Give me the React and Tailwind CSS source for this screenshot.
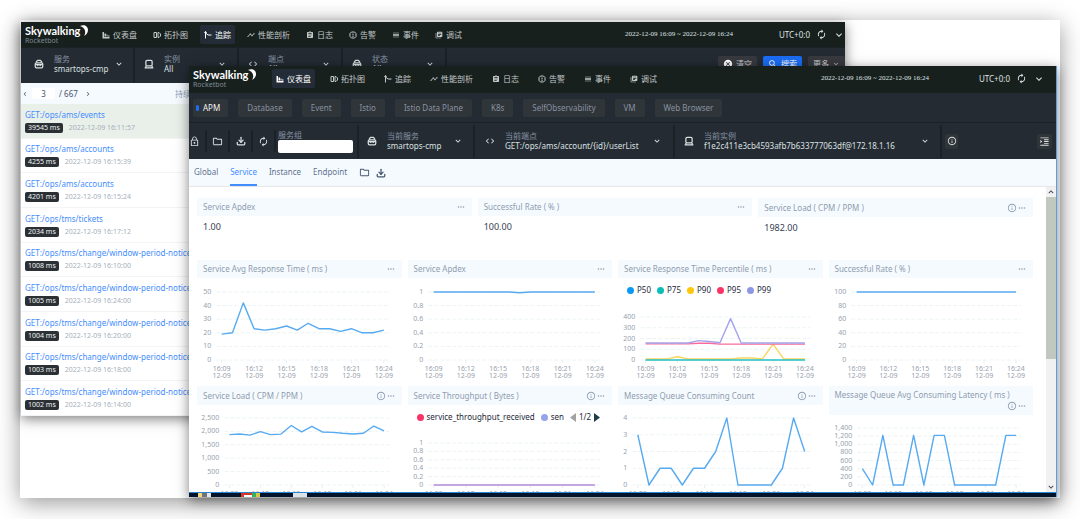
import clsx from "clsx";
import {
  MdAssignment,
  MdAutorenew,
  MdCancel,
  MdChevronLeft,
  MdChevronRight,
  MdCode,
  MdExpandMore,
  MdFormatIndentIncrease,
  MdInfoOutline,
  MdKeyboardArrowDown,
  MdKeyboardArrowUp,
  MdLibraryBooks,
  MdLockOutline,
  MdMoreHoriz,
  MdOutlineFolder,
  MdReorder,
  MdSearch,
  MdTimeline,
} from "react-icons/md";
import { Download } from "lucide-react";

const BLUE = "#57aaf0";

const TRACES = [
  { path: "GET:/ops/ams/events", ms: 39545, time: "2022-12-09 16:11:57" },
  { path: "GET:/ops/ams/accounts", ms: 4255, time: "2022-12-09 16:15:39" },
  { path: "GET:/ops/ams/accounts", ms: 4201, time: "2022-12-09 16:15:24" },
  { path: "GET:/ops/tms/tickets", ms: 2034, time: "2022-12-09 16:17:12" },
  { path: "GET:/ops/tms/change/window-period-notice", ms: 1008, time: "2022-12-09 16:10:00" },
  { path: "GET:/ops/tms/change/window-period-notice", ms: 1005, time: "2022-12-09 16:24:00" },
  { path: "GET:/ops/tms/change/window-period-notice", ms: 1004, time: "2022-12-09 16:20:00" },
  { path: "GET:/ops/tms/change/window-period-notice", ms: 1003, time: "2022-12-09 16:18:00" },
  { path: "GET:/ops/tms/change/window-period-notice", ms: 1002, time: "2022-12-09 16:14:00" },
];

const LAYERS = ["APM", "Database", "Event", "Istio", "Istio Data Plane", "K8s", "SelfObservability", "VM", "Web Browser"];

const TIMES = ["16:09", "16:12", "16:15", "16:18", "16:21", "16:24"];

function ChartIcon(props) {
  return (
    <svg viewBox="0 0 16 16" fill="currentColor" {...props}>
      <path d="M1 2h3v10h11v3H1zM5 5h3v6H5zM9 7h2v4H9zM12 9h3v2h-3z" />
    </svg>
  );
}

function TopologyIcon(props) {
  return (
    <svg viewBox="0 0 16 16" fill="none" stroke="currentColor" strokeWidth="2" {...props}>
      <path d="M2 3h5v10H2zM10 3h2l3 3v4l-3 3h-2z" />
    </svg>
  );
}

function TraceIcon(props) {
  return (
    <svg viewBox="0 0 16 16" fill="none" stroke="currentColor" strokeWidth="2" {...props}>
      <path d="M3 1v14M3 4l5 4h7" />
      <circle cx="3" cy="3" r="1.5" fill="currentColor" />
    </svg>
  );
}

function AlarmIcon(props) {
  return (
    <svg viewBox="0 0 16 16" fill="none" stroke="currentColor" strokeWidth="2" {...props}>
      <path d="M5 2h6l3 3v6l-3 3H5l-3-3V5zM8 5v4M8 10v2" />
    </svg>
  );
}

function ServiceIcon(props) {
  return (
    <svg viewBox="0 0 16 16" fill="none" stroke="currentColor" strokeWidth="2" {...props}>
      <path d="M4 6V4l2-2h4l2 2v2" />
      <rect x="2" y="6" width="12" height="8" rx="2" />
      <path d="M2 9h12M6 9v2M10 9v2" />
    </svg>
  );
}

function InstanceIcon(props) {
  return (
    <svg viewBox="0 0 16 16" fill="none" stroke="currentColor" strokeWidth="2" {...props}>
      <rect x="3" y="2" width="10" height="9" rx="2" />
      <path d="M1 14h14M3 11v3M13 11v3" />
    </svg>
  );
}

const MENU = [
  { name: "仪表盘", icon: ChartIcon },
  { name: "拓扑图", icon: TopologyIcon },
  { name: "追踪", icon: TraceIcon },
  { name: "性能剖析", icon: MdTimeline },
  { name: "日志", icon: MdAssignment },
  { name: "告警", icon: AlarmIcon },
  { name: "事件", icon: MdReorder },
  { name: "调试", icon: MdLibraryBooks },
];

function Logo() {
  return (
    <div className="w-[58px] shrink-0">
      <div className="flex items-start">
        <span className="font-[Lato] text-[11px] leading-[12px] font-bold text-white">Skywalking</span>
        <svg viewBox="0 0 8 11" className="h-[11px] w-2 shrink-0">
          <path d="M0 1C4-1 8 1 8 5c0 3-2 5-4 6 2-3 2-8-4-10z" fill="#fff" />
        </svg>
      </div>
      <div className="text-[7px] leading-[8px] text-[#7d8a94]">Rocketbot</div>
    </div>
  );
}

function TopNav({ active, className, menuClass, rightClass }) {
  return (
    <header className={clsx("flex items-center bg-[#18201e] text-[#c3c9c9]", className)}>
      <Logo />
      <nav className={clsx("flex items-center", menuClass)}>
        {MENU.map(({ name, icon: Icon }) => (
          <a
            key={name}
            href="#"
            className={clsx(
              "flex h-[19px] items-center gap-[3px] rounded-xs px-1 text-[8px] whitespace-nowrap",
              name === active && "bg-[#242c37] text-white"
            )}
          >
            <Icon className="h-2 w-2" />
            {name}
          </a>
        ))}
      </nav>
      <div className={clsx("ml-auto flex items-center text-[#dfe3e3]", rightClass)}>
        <span className="font-['Liberation_Serif'] text-[7px] whitespace-nowrap">
          2022-12-09 16:09 ~ 2022-12-09 16:24
        </span>
        <div className="flex items-center gap-1.5">
          <span className="text-[8px]">UTC+0:0</span>
          <button aria-label="刷新">
            <MdAutorenew className="h-[11px] w-[11px]" />
          </button>
          <button aria-label="展开">
            <MdExpandMore className="h-3 w-3" />
          </button>
        </div>
      </div>
    </header>
  );
}

function Selector({ icon: Icon, label, value, className }) {
  return (
    <label className={clsx("flex shrink-0 items-center border-r-2 border-[#1b2226] text-[#dbe0e0]", className)}>
      <Icon className="mr-[10px] h-[10px] w-[10px] shrink-0" />
      <span className="flex min-w-0 flex-1 flex-col">
        <span className="text-[8px] leading-[10px] text-[#8793a3]">{label}</span>
        <select className="w-full appearance-none bg-transparent text-[8px] leading-[10px]">
          <option>{value}</option>
        </select>
      </span>
      <MdExpandMore className="h-[10px] w-[10px] shrink-0" />
    </label>
  );
}

function TraceWindow() {
  return (
    <section className="absolute top-0.5 right-[215px] bottom-[82px] left-px flex flex-col overflow-hidden bg-white shadow-[0_3px_12px_rgba(0,0,0,0.5)]">
      <TopNav active="追踪" className="h-[25px] shrink-0 pl-1" menuClass="ml-[15px] gap-2" rightClass="gap-[46px]" />
      <div className="flex h-9 shrink-0 border-t border-[#1b2226] bg-[#242b33]">
        <Selector icon={ServiceIcon} label="服务" value="smartops-cmp" className="w-[114px] pr-[9px] pb-1 pl-[13px]" />
        <Selector icon={InstanceIcon} label="实例" value="All" className="w-[104px] pr-[10px] pb-1 pl-[9px]" />
        <Selector icon={MdCode} label="端点" value="All" className="w-[104px] pr-[10px] pb-1 pl-[9px]" />
        <Selector icon={ServiceIcon} label="状态" value="All" className="w-[104px] pr-[10px] pb-1 pl-[9px]" />
        <div className="ml-auto flex items-start gap-1.5 pt-2 text-[8px] text-[#c8cccc]">
          <button className="flex h-4 items-center gap-[3px] rounded-xs bg-[#37393f] px-[5px]">
            <MdCancel className="h-[10px] w-[10px] text-white" />
            清空
          </button>
          <button className="flex h-4 items-center gap-[3px] rounded-xs bg-[#1b6df5] px-[5px] text-white">
            <MdSearch className="h-[10px] w-[10px]" />
            搜索
          </button>
          <button className="flex h-4 items-center gap-[3px] rounded-xs bg-[#37393f] px-[5px]">
            更多
            <MdExpandMore className="h-2 w-2" />
          </button>
        </div>
      </div>
      <div className="flex min-h-0 w-48 flex-1 flex-col">
        <div className="flex h-[21px] shrink-0 items-center bg-[#f5faff] pr-1.5 text-[8px] text-slate-600">
          <button className="w-[11px] text-slate-600" aria-label="上一页">
            <MdChevronLeft className="h-2 w-2" />
          </button>
          <input className="h-[11px] w-[23px] rounded-xs bg-white text-center" defaultValue="3" aria-label="页码" />
          <span className="ml-1">/ 667</span>
          <button className="ml-1.5 text-slate-600" aria-label="下一页">
            <MdChevronRight className="h-2 w-2" />
          </button>
          <span className="ml-auto text-slate-400">持续时间</span>
        </div>
        <ul className="grid flex-1 auto-rows-fr">
          {TRACES.map((trace, i) => (
            <li
              key={i}
              className={clsx(
                "flex flex-col justify-center gap-[3px] border-b border-gray-100 pl-1",
                i === 0 && "bg-[#e9f0ea]"
              )}
            >
              <a href="#" className="text-[8px] leading-[11px] whitespace-nowrap text-[#448dfe]">
                {trace.path}
              </a>
              <div className="flex items-center gap-1.5 text-[7px] leading-[10px]">
                <span className="rounded-xs bg-[#2b3034] px-[3px] text-gray-100">{trace.ms} ms</span>
                <span className="text-[#a5afba]">{trace.time}</span>
              </div>
            </li>
          ))}
        </ul>
      </div>
    </section>
  );
}

function Chart({ left, top, bottom, height, ticks, max, series }) {
  const right = 192;
  const step = (right - left) / 16;
  const x = (i) => left + step * (i + 0.5);
  const y = (v) => bottom - (v / max) * (bottom - top);
  return (
    <svg viewBox={`0 0 204 ${height}`} height={height} className="block w-full">
      {ticks.map((tick, i) => {
        const ty = top + ((bottom - top) * i) / (ticks.length - 1);
        return (
          <g key={tick}>
            <line x1={left} x2={right} y1={ty} y2={ty} stroke="#edf3f4" strokeWidth="1" strokeDasharray="4 2" />
            <text x={left - 5} y={ty + 2} textAnchor="end" fontSize="7" fill="#98a2ae">
              {tick}
            </text>
          </g>
        );
      })}
      {TIMES.map((time, i) => (
        <g key={time} fontSize="7" fill="#98a2ae" textAnchor="middle">
          <line x1={x(i * 3)} x2={x(i * 3)} y1={bottom} y2={bottom + 3} stroke="#e8eef0" />
          <text x={x(i * 3)} y={bottom + 11}>{time}</text>
          <text x={x(i * 3)} y={bottom + 18}>12-09</text>
        </g>
      ))}
      {series.map(({ color, data }) => (
        <polyline
          key={color}
          points={data.map((v, i) => `${x(i)},${y(v)}`).join(" ")}
          fill="none"
          stroke={color}
          strokeWidth="1.4"
          strokeLinejoin="round"
        />
      ))}
    </svg>
  );
}

function Widget({ title, info, children }) {
  return (
    <article className="min-w-0">
      <div className="flex flex-wrap items-center gap-x-2 bg-[#f5faff] px-1.5 py-1 text-[#8f9dae]">
        <h2 className="text-[8px] leading-[10px] whitespace-nowrap">{title}</h2>
        <span className={clsx("ml-auto flex items-center", info && "h-[11px]")}>
          {info && <MdInfoOutline className="h-[10px] w-[10px]" />}
          <button aria-label="更多" className="flex">
            <MdMoreHoriz className="h-[10px] w-[10px]" />
          </button>
        </span>
      </div>
      {children}
    </article>
  );
}

function Dot({ color }) {
  return <span className={clsx("h-[7px] w-[7px] shrink-0 rounded-full", color)} />;
}

const PERCENTILES = [
  { name: "P50", color: "bg-[#0b98f5]" },
  { name: "P75", color: "bg-[#0abdb8]" },
  { name: "P90", color: "bg-[#fec70b]" },
  { name: "P95", color: "bg-[#fb3468]" },
  { name: "P99", color: "bg-[#8f96e6]" },
];

const flat = (v) => Array(16).fill(v);

function Dashboard() {
  return (
    <div className="min-w-0 flex-1 space-y-1.5 pt-[11px] pr-[13px] pl-2">
      <div className="grid h-14 grid-cols-3 gap-1.5">
        <Widget title="Service Apdex">
          <p className="px-1.5 pt-1 text-[9px] leading-[14px] text-gray-700">1.00</p>
        </Widget>
        <Widget title="Successful Rate ( % )">
          <p className="px-1.5 pt-1 text-[9px] leading-[14px] text-gray-700">100.00</p>
        </Widget>
        <Widget title="Service Load ( CPM / PPM )" info>
          <p className="px-1.5 pt-1 text-[9px] leading-[14px] text-gray-700">1982.00</p>
        </Widget>
      </div>
      <div className="grid grid-cols-4 gap-1.5">
        <Widget title="Service Avg Response Time ( ms )">
          <Chart
            left={19} top={14} bottom={82} height={102} max={50}
            ticks={["50", "40", "30", "20", "10", "0"]}
            series={[{ color: BLUE, data: [19, 20, 42, 23, 22, 23, 25, 22, 27, 23, 23, 21, 23, 20, 20, 22] }]}
          />
        </Widget>
        <Widget title="Service Apdex">
          <Chart
            left={20} top={14} bottom={82} height={102} max={1}
            ticks={["1", "0.8", "0.6", "0.4", "0.2", "0"]}
            series={[{ color: BLUE, data: [1, 1, 1, 1, 1, 1, 1, 1, 0.99, 1, 1, 1, 1, 1, 1, 1] }]}
          />
        </Widget>
        <Widget title="Service Response Time Percentile ( ms )">
          <div className="flex h-6 items-center gap-1.5 pl-[9px] text-[8px] text-gray-800">
            {PERCENTILES.map((p) => (
              <span key={p.name} className="flex items-center gap-[3px]">
                <Dot color={p.color} />
                {p.name}
              </span>
            ))}
          </div>
          <Chart
            left={22} top={15} bottom={58} height={78} max={400}
            ticks={["400", "300", "200", "100", "0"]}
            series={[
              { color: "#fbd45c", data: [10, 10, 10, 30, 10, 10, 10, 10, 10, 18, 18, 10, 147, 10, 10, 10] },
              { color: "#22bfc4", data: flat(0) },
              { color: "#fb6a9a", data: [150, 150, 150, 150, 150, 156, 156, 148, 148, 148, 148, 148, 148, 148, 148, 148] },
              { color: "#a3a4ec", data: [158, 158, 158, 158, 158, 180, 172, 160, 385, 158, 158, 158, 158, 158, 158, 158] },
            ]}
          />
        </Widget>
        <Widget title="Successful Rate ( % )">
          <Chart
            left={22} top={14} bottom={82} height={102} max={100}
            ticks={["100", "80", "60", "40", "20", "0"]}
            series={[{ color: BLUE, data: flat(100) }]}
          />
        </Widget>
      </div>
      <div className="grid grid-cols-4 gap-1.5">
        <Widget title="Service Load ( CPM / PPM )" info>
          <Chart
            left={27} top={13} bottom={80} height={102} max={2500}
            ticks={["2,500", "2,000", "1,500", "1,000", "500", "0"]}
            series={[
              {
                color: BLUE,
                data: [1880, 1905, 1860, 1990, 1880, 1900, 2220, 1980, 2190, 1980, 1965, 1930, 1905, 1930, 2200, 2020],
              },
            ]}
          />
        </Widget>
        <Widget title="Service Throughput ( Bytes )" info>
          <div className="flex h-6 items-center gap-[3px] pl-[9px] text-[8px] whitespace-nowrap text-gray-800">
            <Dot color="bg-[#fb3468]" />
            <span className="mr-[3px]">service_throughput_received</span>
            <Dot color="bg-[#95a4ea]" />
            <span className="mr-[3px]">sen</span>
            <button aria-label="上一页">
              <svg viewBox="0 0 6 9" className="h-[9px] w-1.5"><path d="M6 0v9L0 4.5z" fill="#a3a3a3" /></svg>
            </button>
            <span>1/2</span>
            <button aria-label="下一页">
              <svg viewBox="0 0 6 9" className="h-[9px] w-1.5"><path d="M0 0v9l6-4.5z" fill="#223b4a" /></svg>
            </button>
          </div>
          <Chart
            left={20} top={14} bottom={56} height={78} max={1}
            ticks={["1", "0.8", "0.6", "0.4", "0.2", "0"]}
            series={[{ color: "#b58ad8", data: flat(0) }]}
          />
        </Widget>
        <Widget title="Message Queue Consuming Count" info>
          <Chart
            left={14} top={13} bottom={80} height={102} max={4}
            ticks={["4", "3", "2", "1", "0"]}
            series={[{ color: BLUE, data: [3, 0, 1, 1, 0, 1, 1, 2, 4, 0, 0, 0, 0, 1, 4, 2] }]}
          />
        </Widget>
        <Widget title="Message Queue Avg Consuming Latency ( ms )" info>
          <Chart
            left={28} top={13} bottom={70} height={92} max={1400}
            ticks={["1,400", "1,200", "1,000", "800", "600", "400", "200", "0"]}
            series={[
              { color: BLUE, data: [400, 0, 1220, 0, 0, 1220, 0, 1220, 1220, 0, 0, 0, 0, 0, 1220, 1220] },
            ]}
          />
        </Widget>
      </div>
    </div>
  );
}

function ToolButton({ label, children }) {
  return (
    <button aria-label={label} className="flex h-[22px] w-[23px] shrink-0 items-center justify-center border-r-2 border-[#1b2226]">
      {children}
    </button>
  );
}

function DashboardWindow() {
  return (
    <section className="absolute top-[46px] right-[3px] bottom-px left-[169px] flex flex-col overflow-hidden border-r border-[#5b9fe0] bg-white shadow-[0_3px_12px_rgba(0,0,0,0.5)]">
      <TopNav active="仪表盘" className="h-[27px] shrink-0 pr-[11px] pb-0.5 pl-1" menuClass="ml-[21px] gap-[11px]" rightClass="gap-[50px]" />
      <div className="flex h-[30px] shrink-0 items-center gap-[10px] border-b border-[#1b2226] bg-[#242b33] pl-1 text-[8px]">
        {LAYERS.map((layer, i) => (
          <button
            key={layer}
            className={clsx(
              "flex h-[18px] items-center rounded-xs bg-[#30353a] whitespace-nowrap",
              i === 0 ? "gap-1 pr-2 pl-[3px] text-gray-100" : "px-[9px] text-[#8791a0]"
            )}
          >
            {i === 0 && <span className="h-1.5 w-[3px] rounded-full bg-[#1b6df5]" />}
            {layer}
          </button>
        ))}
      </div>
      <div className="flex h-9 shrink-0 items-center bg-[#242b33] text-[#dbe0e0]">
        <button aria-label="锁定" className="flex h-[22px] w-[18px] shrink-0 items-center border-r-2 border-[#1b2226]">
          <MdLockOutline className="h-[11px] w-[11px]" />
        </button>
        <ToolButton label="打开"><MdOutlineFolder className="h-[11px] w-[11px]" /></ToolButton>
        <ToolButton label="导出"><Download className="h-[10px] w-[10px]" strokeWidth={3} /></ToolButton>
        <ToolButton label="刷新"><MdAutorenew className="h-[11px] w-[11px]" /></ToolButton>
        <label className="mr-1 ml-0.5 flex w-[75px] shrink-0 flex-col text-[8px] leading-[10px] text-[#8793a3]">
          服务组
          <input className="h-[13px] rounded-xs bg-white px-1 text-gray-700" />
        </label>
        <Selector icon={ServiceIcon} label="当前服务" value="smartops-cmp" className="h-[33px] w-[118px] border-l-2 pr-[10px] pl-2" />
        <Selector icon={MdCode} label="当前端点" value="GET:/ops/ams/account/{id}/userList" className="h-[33px] w-[200px] pr-[11px] pl-[10px]" />
        <Selector icon={InstanceIcon} label="当前实例" value="f1e2c411e3cb4593afb7b633777063df@172.18.1.16" className="h-[33px] w-[267px] pr-[10px] pl-[9px]" />
        <button aria-label="说明" className="ml-[3px] flex h-[15px] w-[13px] items-center justify-center rounded-xs bg-[#30353a]">
          <MdInfoOutline className="h-[10px] w-[10px]" />
        </button>
        <button aria-label="收起" className="mr-1 ml-auto flex h-[15px] w-[15px] items-center justify-center rounded-xs bg-[#30353a]">
          <MdFormatIndentIncrease className="h-[11px] w-[11px]" />
        </button>
      </div>
      <div className="flex h-7 shrink-0 items-stretch gap-3 border-b border-gray-200 bg-[#f5faff] pl-[5px] text-[8px] text-slate-500">
        {["Global", "Service", "Instance", "Endpoint"].map((tab) => (
          <a
            key={tab}
            href="#"
            className={clsx(
              "flex items-center border-b-2",
              tab === "Service" ? "border-[#448dfe] text-[#448dfe]" : "border-transparent"
            )}
          >
            {tab}
          </a>
        ))}
        <div className="flex items-center gap-1.5 text-slate-600">
          <button aria-label="打开"><MdOutlineFolder className="h-[11px] w-[11px]" /></button>
          <button aria-label="导出"><Download className="h-[10px] w-[10px]" strokeWidth={3} /></button>
        </div>
      </div>
      <div className="flex min-h-0 flex-1 overflow-hidden">
        <Dashboard />
        <div className="flex h-full w-[10px] shrink-0 flex-col bg-[#f1f1f1] text-gray-700">
          <MdKeyboardArrowUp className="h-[10px] w-[10px] shrink-0" />
          <div className="h-[53%] bg-[#c0c8c0]" />
          <MdKeyboardArrowDown className="mt-auto h-[10px] w-[10px] shrink-0" />
        </div>
      </div>
      <div className="flex h-[5px] shrink-0 border-t border-[#2f86d0] bg-[#03142d]">
        <span className="ml-[9px] w-1 bg-[#f5d97a]" />
        <span className="w-[5px] bg-[#6f7478]" />
        <span className="w-1 bg-[#e3e7e9]" />
        <span className="ml-[30px] w-[3px] bg-[#d8352c]" />
        <span className="w-2 border-t-2 border-[#d8352c] bg-white" />
        <span className="w-1 bg-[#34b553]" />
        <span className="w-1 bg-[#d9c34a]" />
        <span className="ml-[33px] w-[14px] bg-[#dbe2e8]" />
      </div>
    </section>
  );
}

export default function App() {
  return (
    <main className="flex min-h-screen flex-col bg-white p-5 pb-[21px] font-['Noto_Sans','Noto_Sans_CJK_SC',sans-serif]">
      <div className="relative flex-1 bg-white shadow-[0_5px_22px_rgba(0,0,0,0.4)]">
        <TraceWindow />
        <DashboardWindow />
      </div>
    </main>
  );
}
